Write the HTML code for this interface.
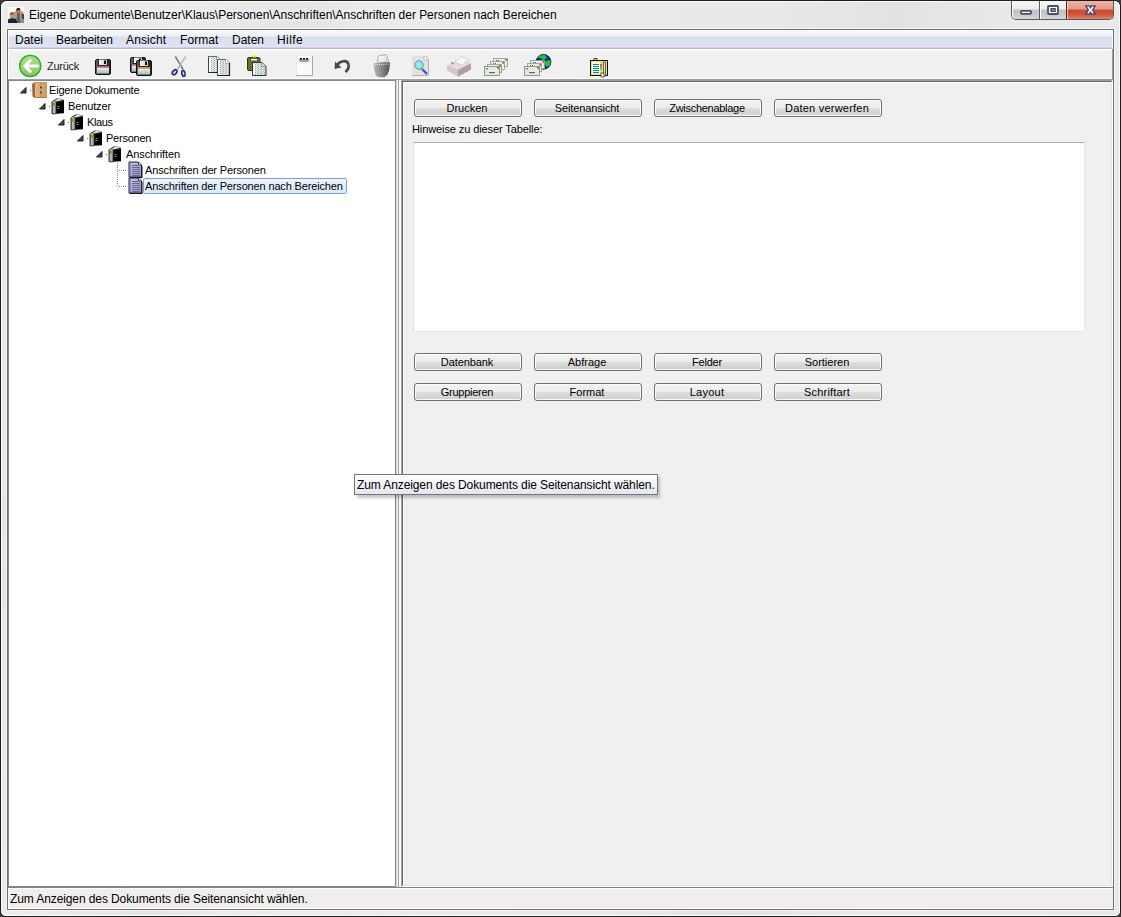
<!DOCTYPE html>
<html><head><meta charset="utf-8">
<style>
*{box-sizing:border-box;margin:0;padding:0}
html,body{width:1121px;height:917px;overflow:hidden;background:#3a3a3a}
body{position:relative;font-family:"Liberation Sans",sans-serif;color:#000}
.a{position:absolute}
.t{position:absolute;white-space:pre;line-height:14px}
#frame{left:0;top:0;width:1121px;height:917px;border:1px solid #1c1c1c;border-radius:7px 7px 6px 6px;
 background:linear-gradient(100deg,#ebebeb 0%,#e6e6e6 8%,#ececec 14%,#e4e4e4 24%,#ebebeb 30%,#e9e9e9 60%,#e2e2e2 70%,#eaeaea 80%,#e8e8e8 100%)}
#frameHi{left:1px;top:1px;width:1119px;height:915px;border:1px solid #fafafa;border-radius:6px 6px 5px 5px;border-bottom-color:#fff}
#client{left:7px;top:29px;width:1107px;height:881px;border:1px solid #6f6f6f;background:#f0f0f0}
#clientHi{left:6px;top:28px;width:1109px;height:883px;border:1px solid #f6f6f6}
.menu{left:8px;top:30px;width:1105px;height:19px;background:linear-gradient(#ffffff 0px,#f7f8fc 1px,#eef0f8 6px,#d9deef 7px,#dde2f2 13px,#e1e5f4 17px,#b6bcd0 18px,#b6bcd0 19px);box-shadow:inset 1px 0 0 rgba(255,255,255,.8),inset -1px 0 0 rgba(255,255,255,.8)}
.mt{top:34px;font-size:12px;line-height:12px}
.tb{left:8px;top:49px;width:1105px;height:31px;background:#f0f0f0;border-bottom:1px solid #a0a0a0;border-right:1px solid #a0a0a0;box-shadow:inset 1px 1px 0 #fff,inset 0 2px 0 #f8f8f8,inset 0 -1px 0 #fff}
#tree{left:8px;top:80px;width:388px;height:807px;border:1px solid #828790;background:#fff}
.tt{font-size:11px;letter-spacing:-0.15px;line-height:13px}
#right{left:401px;top:80px;width:712px;height:807px;border-top:1px solid #a0a0a0;border-left:1px solid #a0a0a0;border-right:1px solid #fff;border-bottom:1px solid #fff}
#rightIn{left:402px;top:81px;width:710px;height:805px;border-top:1px solid #696969;border-left:1px solid #696969;border-right:1px solid #e3e3e3;border-bottom:1px solid #e3e3e3;background:#f0f0f0;box-shadow:inset 1px 1px 0 #fafafa}
.btn{position:absolute;width:108px;height:18px;border:1px solid #707070;border-radius:3px;
 background:linear-gradient(#f2f2f2 0%,#ebebeb 50%,#dddddd 50%,#cfcfcf 100%);
 box-shadow:inset 0 0 0 1px rgba(255,255,255,.85);
 font-size:11px;letter-spacing:-0.15px;line-height:17px;text-align:center;color:#000;padding-right:2px}
#status{left:8px;top:887px;width:1105px;height:22px;border-top:1px solid #808080;background:#f0edec;box-shadow:inset 0 1px 0 #fff,inset 0 -1px 0 #fff,inset 1px 0 0 #fff}
</style></head><body>
<div id="frame" class="a"></div>
<div id="frameHi" class="a"></div>
<div id="clientHi" class="a"></div>
<div id="client" class="a"></div>

<!-- title -->
<div class="t" style="left:29px;top:8px;font-size:12px;letter-spacing:-0.03px;text-shadow:0 0 6px rgba(255,255,255,.9),0 0 10px rgba(255,255,255,.8)">Eigene Dokumente\Benutzer\Klaus\Personen\Anschriften\Anschriften der Personen nach Bereichen</div>

<!-- caption buttons -->
<svg class="a" style="left:6px;top:5px" width="20" height="20" viewBox="6 5 20 20">
<rect x="8" y="7" width="16" height="16" fill="#fbfbfb"/>
<path d="M14 12 L17 10.5 L21 10.5 L23.5 12.5 L24 23 L13.5 23 Z" fill="#b49e84"/>
<path d="M17 12.5 L20 12.5 L20 23 L16.5 23 Z" fill="#5a626e"/>
<path d="M21.5 13.5 L24 14.5 L24 19.5 L22 19.5 Z" fill="#3a4254"/>
<rect x="20" y="19" width="4" height="4" fill="#a08a68"/>
<ellipse cx="18.3" cy="11.2" rx="2.1" ry="2.6" fill="#c07258"/>
<path d="M16 9.5 Q18 6.5 20.5 9 L20 10 L16.5 10.5 Z" fill="#2a2020"/>
<path d="M8 19.5 Q10 17.8 12.5 18 L16 19 L17.5 23 L8 23 Z" fill="#1e2238"/>
<ellipse cx="12" cy="15.8" rx="2.3" ry="2.6" fill="#c8906c"/>
<path d="M9.5 14.5 Q10.5 11.5 13.5 12.5 L14 14 L10 14.5 Z" fill="#6a4030"/>
</svg>
<div class="a" style="left:1011px;top:1px;width:103px;height:19px;border:1px solid #5a5a5a;border-top:none;border-radius:0 0 5px 5px;overflow:hidden;background:#ccc">
  <div class="a" style="left:0;top:0;width:28px;height:18px;border-right:1px solid #5a5a5a;background:linear-gradient(#f6f6f6 0px,#ececec 8px,#c2c2c2 9px,#c8c8c8 13px,#d2d6de 18px);box-shadow:inset 1px 0 0 #fff"></div>
  <div class="a" style="left:28px;top:0;width:27px;height:18px;border-right:1px solid #6a1a0a;background:linear-gradient(#f6f6f6 0px,#ececec 8px,#c2c2c2 9px,#c8c8c8 13px,#d2d6de 18px);box-shadow:inset 1px 0 0 #fff"></div>
  <div class="a" style="left:55px;top:0;width:47px;height:18px;background:linear-gradient(#eeb4a8 0px,#e49a8a 8px,#cc4a30 9px,#cf5438 13px,#dc8270 18px);box-shadow:inset 1px 0 0 rgba(255,230,220,.7),inset -1px 0 0 rgba(255,230,220,.5)"></div>
</div>
<svg class="a" style="left:1011px;top:0" width="104" height="21" viewBox="1011 0 104 21">
<rect x="1021" y="10.9" width="10" height="3" rx="0.8" fill="#fff" stroke="#4a5068" stroke-width="1.8"/>
<rect x="1048" y="6" width="10" height="8" rx="0.8" fill="#fff" stroke="#4a5068" stroke-width="1.8"/>
<rect x="1051.2" y="8.8" width="3.8" height="2.4" fill="#e8e8e8" stroke="#4a5068" stroke-width="1.6"/>
<path d="M1085.8 5.8 L1089.4 5.8 L1090.5 7.9 L1091.6 5.8 L1095.2 5.8 L1092.6 10 L1095.2 14.2 L1091.6 14.2 L1090.5 12.1 L1089.4 14.2 L1085.8 14.2 L1088.4 10 Z" fill="#f8f8f8" stroke="#3a4060" stroke-width="1.3" stroke-linejoin="round"/>
</svg>

<!-- menu -->
<div class="a menu"></div>
<div class="t mt" style="left:15px;letter-spacing:0px">Datei</div>
<div class="t mt" style="left:56px;letter-spacing:-0.12px">Bearbeiten</div>
<div class="t mt" style="left:126px;letter-spacing:0.13px">Ansicht</div>
<div class="t mt" style="left:180px;letter-spacing:0.08px">Format</div>
<div class="t mt" style="left:232px;letter-spacing:0px">Daten</div>
<div class="t mt" style="left:277px;letter-spacing:0.4px">Hilfe</div>

<!-- toolbar -->
<div class="a tb"></div>
<svg class="a" style="left:0;top:0" width="620" height="80" viewBox="0 0 620 80">
<defs>
<linearGradient id="gcirc" x1="0" x2="0" y1="0" y2="1"><stop offset="0" stop-color="#b4dc8c"/><stop offset="1" stop-color="#8cc464"/></linearGradient>
<linearGradient id="flab" x1="0" x2="0" y1="0" y2="1"><stop offset="0" stop-color="#eef4f6"/><stop offset="1" stop-color="#a8b4b8"/></linearGradient>
<linearGradient id="fshut" x1="0" x2="1" y1="0" y2="0"><stop offset="0" stop-color="#f8f8f8"/><stop offset="1" stop-color="#c8c8c8"/></linearGradient>
<linearGradient id="gpap" x1="0" x2="1" y1="0" y2="1"><stop offset="0" stop-color="#ffffff"/><stop offset="0.6" stop-color="#e8e8e8"/><stop offset="1" stop-color="#b8b8b8"/></linearGradient>
<linearGradient id="gbin" x1="0" x2="1" y1="0" y2="0"><stop offset="0" stop-color="#b8b8b8"/><stop offset="0.5" stop-color="#8a8a8a"/><stop offset="1" stop-color="#505050"/></linearGradient>
<linearGradient id="gprn" x1="0" x2="0" y1="0" y2="1"><stop offset="0" stop-color="#f0e8ec"/><stop offset="1" stop-color="#a89098"/></linearGradient>
<pattern id="tex" width="3" height="2" patternUnits="userSpaceOnUse"><rect width="3" height="2" fill="#dfe6e8"/><rect width="1" height="1" fill="#9eb0b4"/><rect x="2" y="1" width="1" height="1" fill="#b4c2c6"/></pattern>
<pattern id="olive" width="2" height="2" patternUnits="userSpaceOnUse"><rect width="2" height="2" fill="#8a8a30"/><rect width="1" height="1" fill="#4a4a20"/><rect x="1" y="1" width="1" height="1" fill="#5a5a28"/></pattern>
<g id="floppy">
 <rect x="0.5" y="0.5" width="15" height="15" rx="1.5" fill="#2a2a2a" stroke="#111" stroke-width="1"/>
 <rect x="1" y="1" width="2" height="14" fill="#5a5a5a"/>
 <rect x="4" y="0.5" width="8" height="5.5" fill="url(#fshut)"/>
 <rect x="9" y="1.5" width="2" height="3.5" fill="#111"/>
 <rect x="2" y="7" width="12" height="1.6" fill="#d84a78"/>
 <rect x="2" y="8.6" width="12" height="6" fill="url(#flab)"/>
</g>
<g id="docg">
 <path d="M0.5 0.5 L9 0.5 L12.5 4 L12.5 16.5 L0.5 16.5 Z" fill="url(#tex)" stroke="#444" stroke-width="1"/>
 <path d="M0.5 0.5 L9 0.5 L9 4 L12.5 4" fill="none" stroke="#777" stroke-width="0.8"/>
 <path d="M9 0.5 L12.5 4 L9 4 Z" fill="#fff"/>
 <rect x="1" y="1" width="2" height="15" fill="#fafafa"/>
 <path d="M12.5 4 L12.5 16.5 L0.5 16.5" fill="none" stroke="#222" stroke-width="1.2"/>
</g>
<g id="env">
 <rect x="0.5" y="0.5" width="14" height="8" fill="#eaf0e4" stroke="#9aa098" stroke-width="0.9"/>
 <path d="M11.5 1.2 L13.8 1.2 L13.8 3.2 Z" fill="#c02020"/>
 <rect x="3" y="2" width="1" height="1" fill="#555"/><rect x="5" y="2" width="1" height="1" fill="#555"/>
</g>
<g id="env1">
 <rect x="0.5" y="0.5" width="15" height="9" fill="#e4ecdf" stroke="#8a9088" stroke-width="0.9"/>
 <path d="M12.5 1.2 L14.8 1.2 L14.8 3.4 Z" fill="#c02020"/>
 <path d="M2 2 L3 3.5 L4 2" stroke="#444" fill="none" stroke-width="0.7"/>
 <rect x="5" y="6" width="6" height="1.2" fill="#666"/>
</g>
</defs>
<!-- back button -->
<circle cx="30.2" cy="66" r="10.6" fill="url(#gcirc)" stroke="#22b022" stroke-width="1.3"/>
<path d="M30.2 60.6 L24.8 66 L30.2 71.4 M25.5 66 L37.6 66" fill="none" stroke="#fff" stroke-width="3.1" stroke-linecap="round" stroke-linejoin="round"/>
<path d="M29 66 L37 66" stroke="#e0f0d0" stroke-width="0.6" stroke-dasharray="1 1"/>
<!-- save -->
<use href="#floppy" x="95" y="59"/>
<!-- save all -->
<use href="#floppy" x="130" y="57"/>
<g transform="translate(136,60)">
 <rect x="0.5" y="0.5" width="15" height="15" rx="1.5" fill="#2a2a2a" stroke="#111" stroke-width="1"/>
 <rect x="1" y="1" width="2" height="14" fill="#5a5a5a"/>
 <rect x="4" y="0.5" width="8" height="5.5" fill="url(#fshut)"/>
 <rect x="9" y="1.5" width="2" height="3.5" fill="#111"/>
 <rect x="2" y="7" width="12" height="1.6" fill="#e88a3a"/>
 <rect x="2" y="8.6" width="12" height="6" fill="url(#flab)"/>
</g>
<!-- scissors -->
<path d="M175.3 56.5 L183.2 69.5" stroke="#7a7a7a" stroke-width="1.5"/>
<path d="M185.7 56.5 L177.3 69.5" stroke="#b0b0b0" stroke-width="1.5"/>
<path d="M185.2 57.5 L181 64" stroke="#dcdcdc" stroke-width="0.6"/>
<ellipse cx="174.6" cy="72.3" rx="1.9" ry="2.9" transform="rotate(40 174.6 72.3)" fill="#c8d0e8" stroke="#1c2a7a" stroke-width="1.5"/>
<ellipse cx="183.4" cy="73.4" rx="1.6" ry="3" transform="rotate(-12 183.4 73.4)" fill="#c8d0e8" stroke="#1c2a7a" stroke-width="1.5"/>
<!-- copy -->
<use href="#docg" x="208" y="56"/>
<use href="#docg" x="217" y="59"/>
<!-- paste -->
<rect x="247.5" y="57.5" width="12.5" height="13" rx="1.5" fill="url(#olive)" stroke="#303018" stroke-width="1"/>
<rect x="250.5" y="58.5" width="7" height="2.5" fill="#f0f0e8" stroke="#444" stroke-width="0.8"/>
<rect x="252" y="55.5" width="4" height="2" fill="#f0e800"/>
<path d="M252.5 62.5 L262 62.5 L266 66.5 L266 75.5 L252.5 75.5 Z" fill="url(#tex)" stroke="#333" stroke-width="1"/>
<path d="M262 62.5 L266 66.5 L262 66.5 Z" fill="#fff" stroke="#666" stroke-width="0.6"/>
<rect x="253" y="63" width="2" height="12" fill="#f6f6f6"/>
<!-- blank page -->
<rect x="296" y="56" width="16" height="19" fill="#fafafa"/>
<path d="M312.5 56 L312.5 75.5 L296 75.5" fill="none" stroke="#a8a8a8" stroke-width="1"/>
<rect x="296" y="56" width="1" height="19" fill="#e8e8e8"/>
<path d="M298 59 L310 59 L308 62 L300 62 Z" fill="#a0a0a0"/>
<rect x="300" y="58" width="2" height="1.5" fill="#111"/><rect x="303" y="58" width="2" height="1.5" fill="#111"/><rect x="306" y="58" width="2" height="1.5" fill="#111"/>
<!-- undo -->
<path d="M337.5 65 C339.5 60.5 347.5 59.5 348.5 64.5 C349.5 68 347 70.5 345.5 72" fill="none" stroke="#484848" stroke-width="2.6"/>
<path d="M334.5 69 L335 61.5 L341.5 67.5 Z" fill="#484848"/>
<!-- shredder -->
<path d="M378.3 56.2 Q382 54.6 386.6 54.8 L389 62.5 L377 63.5 Z" fill="url(#gpap)" stroke="#8c8c8c" stroke-width="0.7"/>
<path d="M386.6 54.8 L389 62.5 L387 62.7 L385.5 56 Z" fill="#cfcfcf"/>
<path d="M373.5 63.5 Q381 61.8 390 62.5 L389.5 68 Q388.5 75 385 76.8 Q379 78.2 376.5 76 Q374 72 373.5 63.5 Z" fill="url(#gbin)"/>
<path d="M374.5 64.8 L389 64" stroke="#ececec" stroke-width="1" stroke-dasharray="1.2 1"/>
<!-- preview -->
<rect x="412" y="56" width="16" height="19" fill="#e2e2e2"/>
<path d="M428.5 59 L428.5 75.5 L412 75.5" fill="none" stroke="#b4b4b4" stroke-width="1"/>
<path d="M424 56 L428.5 60 L424 60 Z" fill="#fff" stroke="#999" stroke-width="0.5"/>
<path d="M421.5 68.5 L427 74" stroke="#2060e8" stroke-width="2.4"/>
<path d="M420.5 67.5 L422.5 69.5" stroke="#e8a020" stroke-width="2.4"/>
<circle cx="419" cy="65" r="4.2" fill="#88eef6" stroke="#6a8a90" stroke-width="1"/>
<!-- printer -->
<path d="M447.5 65.5 L461 59 L471 63.5 L471 69.5 L458 76.5 L447 70 Z" fill="#c8b8be"/>
<path d="M447.5 65.5 L461 59 L471 63.5 L458 70 Z" fill="#e6dce0"/>
<path d="M447.5 65.5 L458 70 L458 76.5 L447 70 Z" fill="#d4c6cc"/>
<path d="M458 70 L471 63.5 L471 69.5 L458 76.5 Z" fill="#b09ca4"/>
<path d="M454.5 62 L462 56.5 L469 59.5 L462 65.5 Z" fill="#faf4f6" stroke="#c8b8c0" stroke-width="0.6"/>
<path d="M451 62.5 L454 64" stroke="#806870" stroke-width="1"/>
<!-- envelopes x4 -->
<use href="#env" x="493" y="58"/>
<use href="#env" x="490" y="61"/>
<use href="#env" x="487" y="64"/>
<use href="#env1" x="484" y="66"/>
<!-- globe + envelopes -->
<circle cx="543.5" cy="61.8" r="7.4" fill="#0a2aa8" stroke="#0a1a50" stroke-width="0.8"/>
<path d="M537 58 Q540 54.5 545 55 L547 58 L543 60 L541 58 Z" fill="#22cc22"/>
<path d="M545.5 61 L550.5 60 L550 65 L546.5 67 L545 64 Z" fill="#22cc22"/>
<path d="M538 62 L541 63 L540 66 Z" fill="#22cc22"/>
<use href="#env" x="530" y="60"/>
<use href="#env" x="527" y="63"/>
<use href="#env1" x="524" y="66"/>
<!-- clipboard book -->
<rect x="590.5" y="60.5" width="17" height="15" fill="#f2e44a" stroke="#111" stroke-width="1"/>
<rect x="592" y="62" width="8" height="12" fill="#f8f8f0"/>
<rect x="593" y="64" width="6" height="1" fill="#0a8a8a"/><rect x="593" y="66" width="6" height="1" fill="#0a8a8a"/><rect x="593" y="68" width="6" height="1" fill="#0a8a8a"/><rect x="593" y="70" width="6" height="1" fill="#0a8a8a"/><rect x="593" y="72" width="6" height="1" fill="#0a8a8a"/>
<path d="M594 60 L594 58.5 L597 58.5 L597 60" fill="#fff" stroke="#111" stroke-width="0.8"/>
<rect x="600" y="64" width="2" height="3" fill="#e040e0"/><rect x="600" y="67" width="2" height="3" fill="#40e040"/>
<rect x="603.5" y="62" width="2" height="14" fill="#d8d8d8" stroke="#222" stroke-width="0.6"/>
<rect x="601" y="73" width="3" height="4" fill="#f8f8f8" stroke="#111" stroke-width="0.6"/>
</svg>
<div class="t" style="left:47px;top:59px;font-size:11px;letter-spacing:-0.26px;color:#1e1e1e">Zurück</div>

<!-- tree -->
<div id="tree" class="a"></div>
<svg class="a" style="left:0;top:0" width="400" height="200" viewBox="0 0 400 200">
<defs><linearGradient id="cab" x1="0" x2="1" y1="0" y2="0"><stop offset="0" stop-color="#e2b884"/><stop offset="1" stop-color="#c99a5e"/></linearGradient><linearGradient id="spine" x1="0" x2="1"><stop offset="0" stop-color="#707070"/><stop offset="0.45" stop-color="#d0d0d0"/><stop offset="1" stop-color="#505050"/></linearGradient><linearGradient id="docf" x1="0" x2="1" y1="0" y2="1"><stop offset="0" stop-color="#c4c4f4"/><stop offset="1" stop-color="#9090d8"/></linearGradient><g id="book">
 <path d="M5 3 L13 2.2 L13 15.2 L5 15.8 Z" fill="#000"/>
 <path d="M1.5 3.3 L6.5 0.6 L10.5 1 L13 2.3 L5.5 3.6 Z" fill="#ececec" stroke="#777" stroke-width="0.7"/>
 <path d="M4.5 2.8 L8 1.5 L11.5 2.3 L6 3.2 Z" fill="#fff"/>
 <path d="M2 3.2 L6.5 0.8" stroke="#333" stroke-width="1"/>
 <path d="M5.5 3.6 L13 2.3" stroke="#222" stroke-width="0.8"/>
 <rect x="1" y="3.4" width="4.3" height="12.2" fill="url(#spine)"/>
 <rect x="1.4" y="4.8" width="3.6" height="3" fill="#6aa83a"/>
 <path d="M1 3.4 L1 15.8 L5.3 15.8" fill="none" stroke="#111" stroke-width="0.8"/>
 <rect x="6.5" y="8" width="2" height="1" fill="#8a8a8a"/><rect x="6.5" y="10" width="2" height="1" fill="#8a8a8a"/>
</g><g id="doc"><path d="M1.5 0.5 L11 0.5 L14.5 4 L14.5 16 L1.5 16 Z" fill="#111"/><path d="M1 0 L10.5 0 L13.5 3 L13.5 15 L1 15 Z" fill="url(#docf)" stroke="#222" stroke-width="1"/><path d="M10.5 0 L10.5 3 L13.5 3" fill="#e0e0ff" stroke="#222" stroke-width="0.8"/><rect x="4" y="3" width="6" height="1" fill="#6a6a7a"/><rect x="4" y="5" width="8" height="1" fill="#6a6a7a"/><rect x="4" y="7" width="8" height="1" fill="#6a6a7a"/><rect x="4" y="9" width="8" height="1" fill="#6a6a7a"/><rect x="4" y="11" width="8" height="1" fill="#6a6a7a"/><rect x="4" y="13" width="8" height="1" fill="#6a6a7a"/><rect x="1" y="0" width="2" height="15" fill="#7070a0" opacity="0.6"/></g></defs>
<path d="M20.5 93 L26 87.5 L26 93 Z" fill="#474747" stroke="#1e1e1e" stroke-width="1" stroke-linejoin="round"/>
<rect x="30" y="90" width="1" height="1" fill="#7a7a7a"/>
<g transform="translate(32,82)"><path d="M0 2 L3 0 L3 16 L0.5 14.5 Z" fill="#9a6a42"/><rect x="3" y="0.3" width="12" height="15.7" fill="url(#cab)"/><rect x="3" y="0" width="12" height="1.2" fill="#c89860"/><rect x="8.6" y="1" width="0.8" height="15" fill="#b48650"/><circle cx="9" cy="5.5" r="0.9" fill="#4a3020"/><circle cx="9" cy="10.5" r="0.9" fill="#4a3020"/><rect x="3" y="15" width="12" height="1" fill="#a87848"/></g>
<path d="M39.5 109 L45 103.5 L45 109 Z" fill="#474747" stroke="#1e1e1e" stroke-width="1" stroke-linejoin="round"/>
<rect x="49" y="106" width="1" height="1" fill="#7a7a7a"/>
<use href="#book" x="51" y="98"/>
<path d="M58.5 125 L64 119.5 L64 125 Z" fill="#474747" stroke="#1e1e1e" stroke-width="1" stroke-linejoin="round"/>
<rect x="68" y="122" width="1" height="1" fill="#7a7a7a"/>
<use href="#book" x="70" y="114"/>
<path d="M77.5 141 L83 135.5 L83 141 Z" fill="#474747" stroke="#1e1e1e" stroke-width="1" stroke-linejoin="round"/>
<rect x="87" y="138" width="1" height="1" fill="#7a7a7a"/>
<use href="#book" x="89" y="130"/>
<path d="M96.5 157 L102 151.5 L102 157 Z" fill="#474747" stroke="#1e1e1e" stroke-width="1" stroke-linejoin="round"/>
<rect x="106" y="154" width="1" height="1" fill="#7a7a7a"/>
<use href="#book" x="108" y="146"/>
<rect x="117" y="163" width="1" height="1" fill="#8a8a8a"/>
<rect x="117" y="165" width="1" height="1" fill="#8a8a8a"/>
<rect x="117" y="167" width="1" height="1" fill="#8a8a8a"/>
<rect x="117" y="169" width="1" height="1" fill="#8a8a8a"/>
<rect x="117" y="171" width="1" height="1" fill="#8a8a8a"/>
<rect x="117" y="173" width="1" height="1" fill="#8a8a8a"/>
<rect x="117" y="175" width="1" height="1" fill="#8a8a8a"/>
<rect x="117" y="177" width="1" height="1" fill="#8a8a8a"/>
<rect x="117" y="179" width="1" height="1" fill="#8a8a8a"/>
<rect x="117" y="181" width="1" height="1" fill="#8a8a8a"/>
<rect x="117" y="183" width="1" height="1" fill="#8a8a8a"/>
<rect x="117" y="185" width="1" height="1" fill="#8a8a8a"/>
<rect x="119" y="170" width="1" height="1" fill="#8a8a8a"/>
<rect x="121" y="170" width="1" height="1" fill="#8a8a8a"/>
<rect x="123" y="170" width="1" height="1" fill="#8a8a8a"/>
<rect x="125" y="170" width="1" height="1" fill="#8a8a8a"/>
<rect x="119" y="186" width="1" height="1" fill="#8a8a8a"/>
<rect x="121" y="186" width="1" height="1" fill="#8a8a8a"/>
<rect x="123" y="186" width="1" height="1" fill="#8a8a8a"/>
<rect x="125" y="186" width="1" height="1" fill="#8a8a8a"/>
<use href="#doc" x="128" y="162"/>
<use href="#doc" x="128" y="178"/>
</svg>
<div class="a" style="left:143px;top:178px;width:204px;height:16px;border:1px solid #7da2ce;border-radius:2px;background:linear-gradient(#eef4fd,#d9e8fb)"></div>
<div class="t tt" style="left:49px;top:84px;letter-spacing:-0.2px">Eigene Dokumente</div>
<div class="t tt" style="left:68px;top:100px;letter-spacing:-0.14px">Benutzer</div>
<div class="t tt" style="left:87px;top:116px;letter-spacing:-0.375px">Klaus</div>
<div class="t tt" style="left:106px;top:132px;letter-spacing:-0.24px">Personen</div>
<div class="t tt" style="left:126px;top:148px;letter-spacing:-0.1px">Anschriften</div>
<div class="t tt" style="left:145px;top:164px;letter-spacing:-0.14px">Anschriften der Personen</div>
<div class="t tt" style="left:145px;top:180px;letter-spacing:-0.15px">Anschriften der Personen nach Bereichen</div>

<!-- right -->
<div id="right" class="a"></div>
<div id="rightIn" class="a"></div>
<div class="a" style="left:396px;top:80px;width:5px;height:807px;background:linear-gradient(90deg,#d4d4d4 0,#d4d4d4 1px,#f6f6f6 1px,#f6f6f6 2px,#a0a0a0 2px,#a0a0a0 3px,#fbfbfb 3px,#fbfbfb 4px,#fff 4px)"></div>

<div class="btn" style="left:414px;top:99px;letter-spacing:0px">Drucken</div>
<div class="btn" style="left:534px;top:99px;letter-spacing:-0.12px">Seitenansicht</div>
<div class="btn" style="left:654px;top:99px;letter-spacing:-0.28px">Zwischenablage</div>
<div class="btn" style="left:774px;top:99px;letter-spacing:0.22px">Daten verwerfen</div>
<div class="t tt" style="left:412px;top:123px;letter-spacing:-0.1px">Hinweise zu dieser Tabelle:</div>
<div class="a" style="left:413px;top:142px;width:672px;height:190px;background:#fff;border:1px solid #abadb3;border-left-color:#e2e3ea;border-right-color:#e3e9ef;border-bottom-color:#e3e9ef"></div>

<div class="btn" style="left:414px;top:353px;letter-spacing:-0.09px">Datenbank</div>
<div class="btn" style="left:534px;top:353px;letter-spacing:0px">Abfrage</div>
<div class="btn" style="left:654px;top:353px;letter-spacing:-0.18px">Felder</div>
<div class="btn" style="left:774px;top:353px;letter-spacing:0px">Sortieren</div>
<div class="btn" style="left:414px;top:383px;letter-spacing:-0.27px">Gruppieren</div>
<div class="btn" style="left:534px;top:383px;letter-spacing:0px">Format</div>
<div class="btn" style="left:654px;top:383px;letter-spacing:0.26px">Layout</div>
<div class="btn" style="left:774px;top:383px;letter-spacing:0.19px">Schriftart</div>

<!-- status -->
<div id="status" class="a"></div>
<div class="t" style="left:10px;top:892px;font-size:12px;letter-spacing:-0.1px">Zum Anzeigen des Dokuments die Seitenansicht wählen.</div>

<!-- tooltip -->
<div class="a" style="left:357px;top:477px;width:303px;height:21px;background:rgba(0,0,0,.22);filter:blur(1.6px)"></div>
<div class="a" style="left:354px;top:474px;width:304px;height:21px;border:1px solid #767676;background:linear-gradient(#ffffff,#e4e5f0)"></div>
<div class="t" style="left:357px;top:478px;font-size:12px;letter-spacing:-0.1px">Zum Anzeigen des Dokuments die Seitenansicht wählen.</div>

</body></html>
